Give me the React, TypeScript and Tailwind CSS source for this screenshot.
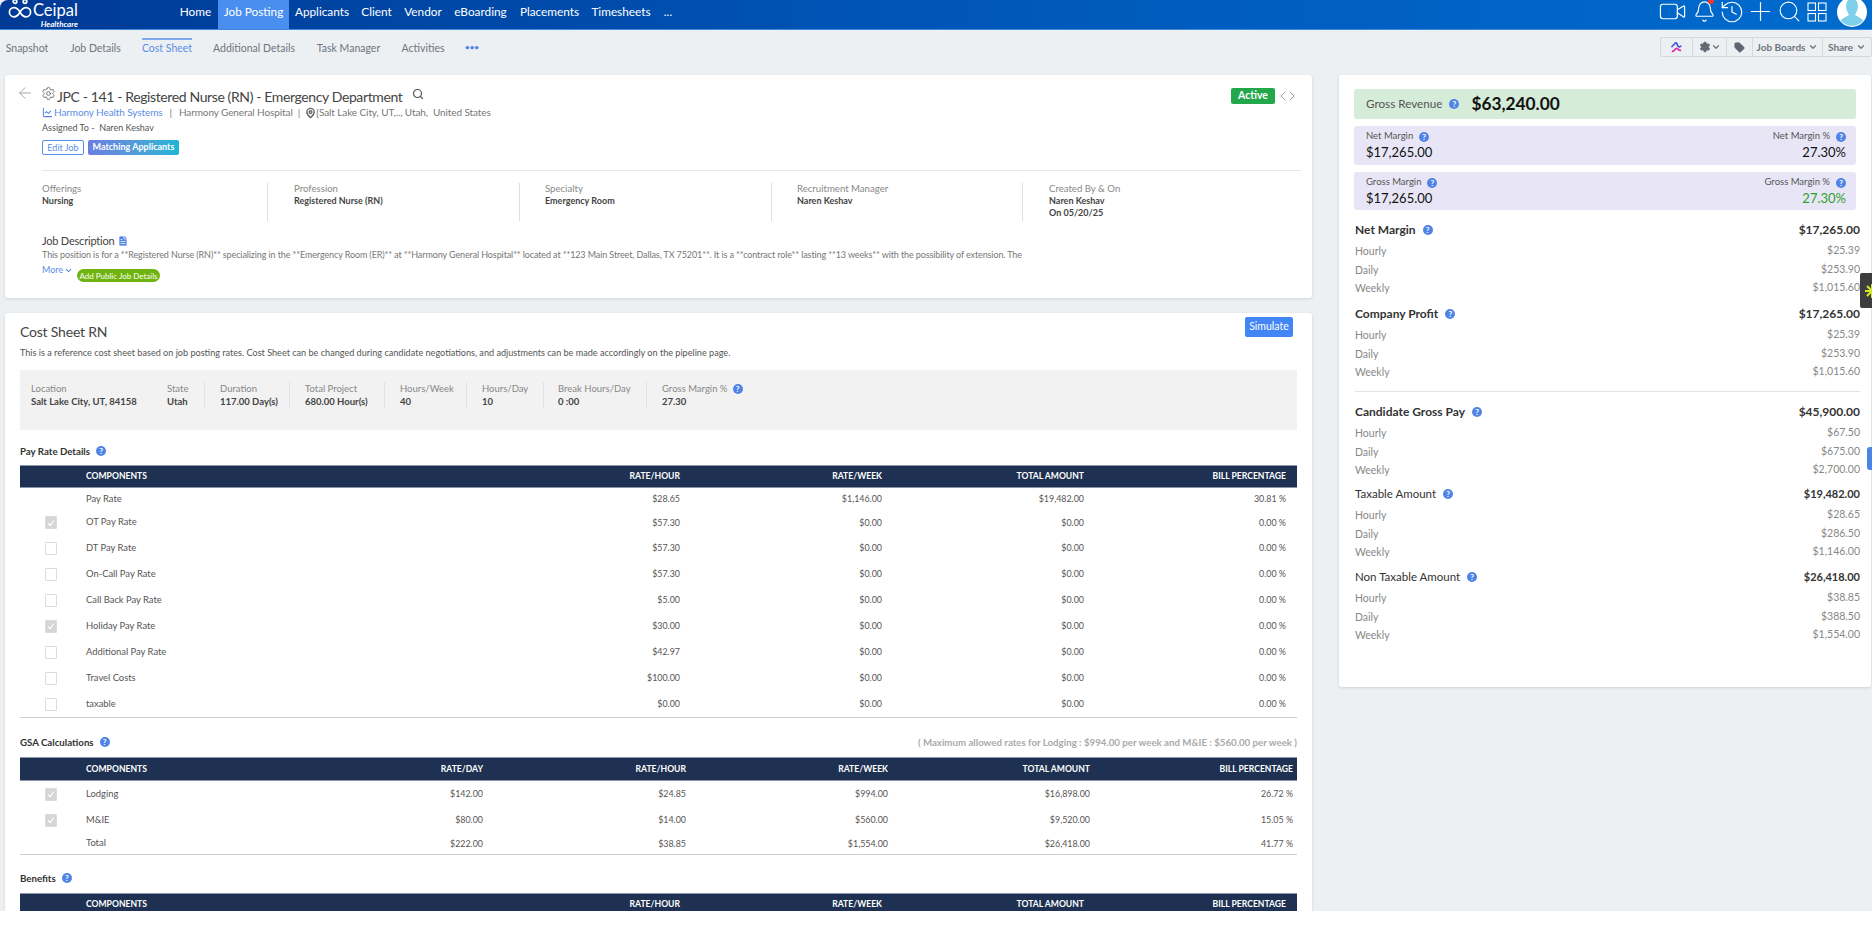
import { ArrowLeft, Bell, ChartLine, ChevronDown, ChevronLeft, ChevronRight, FileText, History, MapPin, Plus, Search, Settings, Tag, Video } from "lucide-react"

const NAV = [
  { label: "Home", w: "w-[45px]" },
  { label: "Job Posting", w: "w-[71px]", active: true },
  { label: "Applicants", w: "w-[66px]" },
  { label: "Client", w: "w-[43px]" },
  { label: "Vendor", w: "w-[50px]" },
  { label: "eBoarding", w: "w-[65px]" },
  { label: "Placements", w: "w-[73px]" },
  { label: "Timesheets", w: "w-[70px]" },
  { label: "...", w: "w-[24px]" },
]

const SUBNAV = [
  { label: "Snapshot", w: "w-[44px]" },
  { label: "Job Details", w: "w-[51px]" },
  { label: "Cost Sheet", w: "w-[50px]", active: true },
  { label: "Additional Details", w: "w-[82px]" },
  { label: "Task Manager", w: "w-[65px]" },
  { label: "Activities", w: "w-[42px]" },
]

const DETAILS = [
  { label: "Offerings", value: ["Nursing"], cls: "w-[226px] border-r" },
  { label: "Profession", value: ["Registered Nurse (RN)"], cls: "w-[252px] pl-[26px] border-r" },
  { label: "Specialty", value: ["Emergency Room"], cls: "w-[252px] pl-[25px] border-r" },
  { label: "Recruitment Manager", value: ["Naren Keshav"], cls: "w-[251px] pl-[25px] border-r" },
  { label: "Created By & On", value: ["Naren Keshav", "On 05/20/25"], cls: "pl-[26px]" },
]

const SUMMARY = [
  { label: "Location", value: "Salt Lake City, UT, 84158", cls: "w-[136px]" },
  { label: "State", value: "Utah", cls: "w-[38px] border-r" },
  { label: "Duration", value: "117.00 Day(s)", cls: "w-[85px] pl-[15px] border-r" },
  { label: "Total Project", value: "680.00 Hour(s)", cls: "w-[95px] pl-[15px] border-r" },
  { label: "Hours/Week", value: "40", cls: "w-[82px] pl-[15px] border-r" },
  { label: "Hours/Day", value: "10", cls: "w-[77px] pl-[15px] border-r" },
  { label: "Break Hours/Day", value: "0 :00", cls: "w-[103px] pl-[14px] border-r" },
]

const PAY_ROWS = [
  ["Pay Rate", "$28.65", "$1,146.00", "$19,482.00", "30.81 %", null, "h-[22px]"],
  ["OT Pay Rate", "$57.30", "$0.00", "$0.00", "0.00 %", true, "h-[25px]"],
  ["DT Pay Rate", "$57.30", "$0.00", "$0.00", "0.00 %", false, "h-[26px]"],
  ["On-Call Pay Rate", "$57.30", "$0.00", "$0.00", "0.00 %", false, "h-[26px]"],
  ["Call Back Pay Rate", "$5.00", "$0.00", "$0.00", "0.00 %", false, "h-[26px]"],
  ["Holiday Pay Rate", "$30.00", "$0.00", "$0.00", "0.00 %", true, "h-[26px]"],
  ["Additional Pay Rate", "$42.97", "$0.00", "$0.00", "0.00 %", false, "h-[26px]"],
  ["Travel Costs", "$100.00", "$0.00", "$0.00", "0.00 %", false, "h-[26px]"],
  ["taxable", "$0.00", "$0.00", "$0.00", "0.00 %", false, "h-[26px]"],
] as const

const GSA_ROWS = [
  ["Lodging", "$142.00", "$24.85", "$994.00", "$16,898.00", "26.72 %", true, "h-[26px]"],
  ["M&IE", "$80.00", "$14.00", "$560.00", "$9,520.00", "15.05 %", true, "h-[26px]"],
  ["Total", "$222.00", "$38.85", "$1,554.00", "$26,418.00", "41.77 %", null, "h-[21px]"],
] as const

const SECTIONS = [
  { title: "Net Margin", total: "$17,265.00", vals: ["$25.39", "$253.90", "$1,015.60"], bold: true, cls: "mt-[11px]" },
  { title: "Company Profit", total: "$17,265.00", vals: ["$25.39", "$253.90", "$1,015.60"], bold: true, cls: "mt-[7px]" },
  { title: "Candidate Gross Pay", total: "$45,900.00", vals: ["$67.50", "$675.00", "$2,700.00"], bold: true, cls: "mt-[11px]" },
  { title: "Taxable Amount", total: "$19,482.00", vals: ["$28.65", "$286.50", "$1,146.00"], bold: false, cls: "mt-[5px]" },
  { title: "Non Taxable Amount", total: "$26,418.00", vals: ["$38.85", "$388.50", "$1,554.00"], bold: false, cls: "mt-[6px]" },
]

function Help({ className = "" }: { className?: string }) {
  return (
    <span className={`inline-flex items-center justify-center w-[10px] h-[10px] rounded-full bg-[#4f84e6] text-white text-[8px] font-bold leading-none shrink-0 ${className}`}>?</span>
  )
}

function Check({ on }: { on: boolean | null }) {
  if (on === null) return null
  return (
    <span className={`flex items-center justify-center w-[12px] h-[13px] rounded-[1px] border border-[#dcdcdc] ${on ? "bg-[#d6d6d6]" : "bg-white"}`}>
      {on && (
        <svg viewBox="0 0 12 12" className="w-[10px] h-[10px]" fill="none" stroke="#fff" strokeWidth="1.4">
          <path d="M2.5 6.5 5 9l4.5-6" />
        </svg>
      )}
    </span>
  )
}

function Logo() {
  return (
    <svg viewBox="0 0 24 20" className="w-[24px] h-[20px] shrink-0" fill="none" stroke="#fff" strokeWidth="1.7">
      <circle cx="7" cy="1.5" r="1.8" />
      <circle cx="17" cy="1.5" r="1.8" />
      <path d="M12 12c-1.6-2.6-3.2-4.4-6-4.4a4.6 4.6 0 0 0 0 9.2c2.8 0 4.4-1.8 6-4.8 1.6-2.6 3.2-4.4 6-4.4a4.6 4.6 0 0 1 0 9.2c-2.8 0-4.4-1.8-6-4.8Z" />
    </svg>
  )
}

function PayHeader() {
  return (
    <div className="grid grid-cols-[66px_392px_202px_202px_202px_202px] items-center h-[23px] bg-[#1e3152] border-t border-b border-[#8a94a6] text-white text-[8.6px] font-bold text-right whitespace-nowrap">
      <span />
      <span className="text-left">COMPONENTS</span>
      <span>RATE/HOUR</span>
      <span>RATE/WEEK</span>
      <span>TOTAL AMOUNT</span>
      <span>BILL PERCENTAGE</span>
    </div>
  )
}

export default function App() {
  return (
    <div className="relative h-[936px] w-[1872px] overflow-hidden bg-white font-['Lato',sans-serif]">
      <div className="h-[911px] overflow-hidden bg-[#edf0f3]">
        {/* top bar */}
        <header className="flex h-[30px] items-stretch overflow-hidden rounded-tl-[8px] bg-linear-to-r from-[#003a96] via-[#0056b8] to-[#006cce] text-white border-b border-[#3d8ae0]">
          <div className="w-[173px] pl-[8px] flex items-start gap-[1px] overflow-hidden">
            <Logo />
            <div className="flex flex-col items-end leading-none">
              <span className="text-[16.5px] leading-[21px] font-normal">Ceipal</span>
              <span className="text-[8px] leading-[7px] italic font-bold">Healthcare</span>
            </div>
          </div>
          {NAV.map(n => (
            <div key={n.label} className={`flex items-center justify-center pb-[6px] text-[11.8px] ${n.w} ${n.active ? "bg-[#4a8ff0]" : ""}`}>
              {n.label}
            </div>
          ))}
          <div className="ml-auto flex items-center pr-[5px] pb-[6px]">
            <Video className="w-[29px] h-[29px]" strokeWidth={1} />
            <span className="relative ml-[6px]">
              <Bell className="w-[23px] h-[23px]" strokeWidth={1.2} />
              <span className="absolute -top-[2px] right-[2px] w-[6px] h-[6px] rounded-full bg-[#f0392b]" />
            </span>
            <History className="ml-[3px] w-[26px] h-[26px]" strokeWidth={1.1} />
            <Plus className="w-[31px] h-[31px]" strokeWidth={0.9} />
            <Search className="ml-[1px] w-[25px] h-[25px]" strokeWidth={1.1} />
            <svg viewBox="0 0 20 20" className="ml-[5px] w-[20px] h-[20px]" fill="none" stroke="#fff" strokeWidth="1.1">
              <rect x="1" y="1" width="7.5" height="7.5" />
              <rect x="11.5" y="1" width="7.5" height="7.5" />
              <rect x="1" y="11.5" width="7.5" height="7.5" />
              <rect x="11.5" y="11.5" width="7.5" height="7.5" />
            </svg>
            <svg viewBox="0 0 30 30" className="ml-[10px] w-[30px] h-[30px] shrink-0">
              <circle cx="15" cy="15" r="15" fill="#fff" />
              <path d="M15 2c4 0 6 3 6 7 0 4-2 7-3 9 3 2 7 3 8 6a15 15 0 0 1-22 0c1-3 5-4 8-6-1-2-3-5-3-9 0-4 2-7 6-7Z" fill="#7fd0ea" />
            </svg>
          </div>
        </header>

        {/* sub nav */}
        <div className="flex h-[45px] items-start justify-between pt-[7px]">
          <div className="flex items-start gap-[21px] pl-[5px] pt-[1px] text-[10.5px] text-[#6f757c]">
            {SUBNAV.map(s => (
              <span key={s.label} className={`h-[20px] pt-[1px] flex items-center justify-center whitespace-nowrap ${s.w} ${s.active ? "border-t-2 border-[#7fa8ee] text-[#5b8ee6] pb-[2px]" : ""}`}>{s.label}</span>
            ))}
            <span className="h-[20px] flex items-center text-[#4f84e6] text-[8px] font-bold pb-[2px]">•••</span>
          </div>
          <div className="flex h-[20px] border border-[#d5d8dc] rounded-[2px] text-[10px] font-bold text-[#6f757c]">
            <div className="flex w-[32px] items-center justify-center border-r border-[#d5d8dc]">
              <svg viewBox="0 0 14 14" className="w-[13px] h-[13px]" fill="none" strokeWidth="1.8">
                <path d="M1.5 6.5 6.5 1.5" stroke="#4f5fe0" />
                <path d="M2 11c3 1 3-3 5-3s2 3 5 2" stroke="#d82fb0" />
                <path d="M6 2c3 0 1 3 3 4s3-1 3-1" stroke="#3a50d8" />
              </svg>
            </div>
            <div className="flex w-[34px] items-center justify-center border-r border-[#d5d8dc]">
              <Settings className="w-[12px] h-[12px]" fill="#5d6570" strokeWidth={2} />
              <ChevronDown className="w-[10px] h-[10px]" strokeWidth={3} />
            </div>
            <div className="flex w-[26px] items-center justify-center border-r border-[#d5d8dc]">
              <Tag className="w-[11px] h-[11px] text-[#5d6570]" fill="#5d6570" />
            </div>
            <div className="flex w-[70px] items-center justify-center gap-[3px] border-r border-[#d5d8dc]">
              Job Boards <ChevronDown className="w-[10px] h-[10px]" strokeWidth={3} />
            </div>
            <div className="flex w-[48px] items-center justify-center gap-[3px]">
              Share <ChevronDown className="w-[10px] h-[10px]" strokeWidth={3} />
            </div>
          </div>
        </div>

        <div className="flex items-start gap-[27px] pl-[5px]">
          {/* left column */}
          <div className="w-[1307px] flex flex-col gap-[15px]">
            <section className="h-[223px] bg-white rounded-[3px] shadow-[0_1px_3px_rgba(0,0,0,0.12)] flex pr-[11px]">
              <div className="w-[37px] shrink-0 pl-[11px] pt-[9px]">
                <ArrowLeft className="w-[18px] h-[18px] text-[#9aa0a6]" strokeWidth={1.2} />
              </div>
              <div className="flex-1 min-w-0 pt-[12px]">
                <div className="flex h-[18px] items-center text-[#444]">
                  <Settings className="w-[15px] h-[15px] -ml-[1px] mr-[1px] -mt-[5px] text-[#666]" strokeWidth={1.4} />
                  <h1 className="text-[14px] tracking-[-0.38px] font-normal whitespace-nowrap">JPC - 141 - Registered Nurse (RN) - Emergency Department</h1>
                  <Search className="w-[12px] h-[12px] ml-[10px] -mt-[5px] text-[#555]" strokeWidth={2.4} />
                  <div className="ml-auto flex items-center mr-[1px]">
                    <span className="flex items-center justify-center w-[44px] h-[16px] rounded-[2px] bg-[#22a84a] text-white text-[10.5px] font-bold">Active</span>
                    <ChevronLeft className="w-[16px] h-[16px] text-[#888]" strokeWidth={1.2} />
                    <ChevronRight className="w-[16px] h-[16px] -ml-[7px] text-[#888]" strokeWidth={1.2} />
                  </div>
                </div>
                <div className="flex h-[15px] items-center text-[10px] tracking-[-0.1px] text-[#777] whitespace-nowrap">
                  <ChartLine className="w-[11px] h-[11px] text-[#4f84e6] mr-[1px]" strokeWidth={2.2} />
                  <span className="text-[#5b8ee6]">Harmony Health Systems</span>
                  <span className="mx-[7px]">|</span>
                  <span>Harmony General Hospital</span>
                  <span className="mx-[5px]">|</span>
                  <MapPin className="w-[11px] h-[12px] text-[#666]" strokeWidth={3} />
                  <span>[Salt Lake City, UT,.., Utah,&nbsp; United States</span>
                </div>
                <div className="h-[15px] flex items-center text-[9px] text-[#555]">Assigned To -&nbsp; Naren Keshav</div>
                <div className="mt-[5px] flex gap-[4px] h-[15px] text-[9px]">
                  <span className="flex w-[42px] items-center justify-center rounded-[2px] border border-[#5b8ee6] text-[#5b8ee6]">Edit Job</span>
                  <span className="flex w-[91px] items-center justify-center rounded-[2px] bg-linear-to-r from-[#6a7fe0] to-[#19b5d5] text-white font-bold pb-[2px]">Matching Applicants</span>
                </div>
                <div className="mt-[15px] border-t border-[#e5e7ea]" />
                <div className="mt-[12px] flex h-[38px]">
                  {DETAILS.map(d => (
                    <div key={d.label} className={`border-[#dcdfe3] ${d.cls}`}>
                      <div className="text-[9.6px] leading-[12px] text-[#888]">{d.label}</div>
                      <div className="text-[9px] leading-[12px] font-bold text-[#444]">
                        {d.value.map(v => <div key={v}>{v}</div>)}
                      </div>
                    </div>
                  ))}
                </div>
                <div className="mt-[12px] h-[16px] flex items-center gap-[3px] text-[11px] tracking-[-0.2px] text-[#444]">
                  Job Description
                  <FileText className="w-[12px] h-[14px] text-white" fill="#4f84e6" strokeWidth={1.5} />
                </div>
                <p className="h-[12px] text-[9px] tracking-[-0.11px] leading-[12px] text-[#777] whitespace-nowrap">This position is for a **Registered Nurse (RN)** specializing in the **Emergency Room (ER)** at **Harmony General Hospital** located at **123 Main Street, Dallas, TX 75201**. It is a **contract role** lasting **13 weeks** with the possibility of extension. The</p>
                <div className="mt-[2px] flex items-start">
                  <span className="flex items-center gap-[1px] h-[14px] w-[35px] text-[9px] text-[#5b8ee6]">More <ChevronDown className="w-[9px] h-[9px]" strokeWidth={3} /></span>
                  <span className="mt-[6px] flex items-center justify-center w-[83px] h-[13px] rounded-full bg-[#6fb40e] text-[8px] text-white">Add Public Job Details</span>
                </div>
              </div>
            </section>

            <section className="h-[600px] bg-white rounded-[3px] shadow-[0_1px_3px_rgba(0,0,0,0.12)] px-[15px] pt-[4px]">
              <div className="flex h-[25px] items-start justify-between">
                <h2 className="mt-[5px] text-[14px] tracking-[-0.2px] leading-[20px] font-normal text-[#444]">Cost Sheet RN</h2>
                <button className="mr-[4px] w-[48px] h-[20px] rounded-[2px] bg-[#4285f4] text-white text-[10.5px]">Simulate</button>
              </div>
              <p className="mt-[4px] h-[14px] text-[9.1px] leading-[14px] text-[#555] whitespace-nowrap">This is a reference cost sheet based on job posting rates. Cost Sheet can be changed during candidate negotiations, and adjustments can be made accordingly on the pipeline page.</p>

              <div className="mt-[10px] h-[60px] bg-[#f2f2f2] pl-[11px] pt-[12px] flex items-start">
                {SUMMARY.map(s => (
                  <div key={s.label} className={`h-[26px] border-[#e2e2e2] whitespace-nowrap ${s.cls}`}>
                    <div className="text-[9.5px] leading-[13px] text-[#888]">{s.label}</div>
                    <div className="text-[9.5px] leading-[13px] font-bold text-[#444]">{s.value}</div>
                  </div>
                ))}
                <div className="h-[26px] pl-[15px] whitespace-nowrap">
                  <div className="flex items-center gap-[5px] text-[9.5px] leading-[13px] text-[#888]">Gross Margin % <Help /></div>
                  <div className="text-[9.5px] leading-[13px] font-bold text-[#444]">27.30</div>
                </div>
              </div>

              <div className="mt-[14px] h-[14px] flex items-center gap-[6px] text-[9.7px] font-bold text-[#333]">Pay Rate Details <Help /></div>
              <div className="mt-[7px]">
                <PayHeader />
                <div className="border-b border-[#d0d0d0]">
                  {PAY_ROWS.map(r => (
                    <div key={r[0]} className={`grid grid-cols-[66px_392px_202px_202px_202px_202px] items-center text-[8.9px] text-[#555] text-right ${r[6]}`}>
                      <span className="pl-[25px]"><Check on={r[5]} /></span>
                      <span className="text-left text-[9.4px]">{r[0]}</span>
                      <span>{r[1]}</span>
                      <span>{r[2]}</span>
                      <span>{r[3]}</span>
                      <span>{r[4]}</span>
                    </div>
                  ))}
                </div>
              </div>

              <div className="mt-[17px] h-[14px] flex items-center text-[9.7px] font-bold text-[#333]">
                <span>GSA Calculations</span>
                <Help className="ml-[6px]" />
                <span className="ml-auto text-[#aaa]">( Maximum allowed rates for Lodging : $994.00 per week and M&amp;IE : $560.00 per week )</span>
              </div>
              <div className="mt-[8px]">
                <div className="grid grid-cols-[66px_197px_200px_203px_202px_202px_203px] items-center h-[24px] bg-[#1e3152] border-t border-b border-[#8a94a6] text-white text-[8.6px] font-bold text-right whitespace-nowrap">
                  <span />
                  <span className="text-left">COMPONENTS</span>
                  <span>RATE/DAY</span>
                  <span>RATE/HOUR</span>
                  <span>RATE/WEEK</span>
                  <span>TOTAL AMOUNT</span>
                  <span>BILL PERCENTAGE</span>
                </div>
                <div className="border-b border-[#d0d0d0]">
                  {GSA_ROWS.map(r => (
                    <div key={r[0]} className={`grid grid-cols-[66px_197px_200px_203px_202px_202px_203px] items-center text-[8.9px] text-[#555] text-right ${r[7]}`}>
                      <span className="pl-[25px]"><Check on={r[6]} /></span>
                      <span className="text-left text-[9.4px]">{r[0]}</span>
                      <span>{r[1]}</span>
                      <span>{r[2]}</span>
                      <span>{r[3]}</span>
                      <span>{r[4]}</span>
                      <span>{r[5]}</span>
                    </div>
                  ))}
                </div>
              </div>

              <div className="mt-[16px] h-[14px] flex items-center gap-[6px] text-[9.7px] font-bold text-[#333]">Benefits <Help /></div>
              <div className="mt-[8px]">
                <PayHeader />
              </div>
            </section>
          </div>

          {/* right column */}
          <aside className="w-[532px] h-[612px] bg-white rounded-[3px] shadow-[0_1px_3px_rgba(0,0,0,0.12)] pl-[15px] pr-[15px] pt-[14px]">
            <div className="flex h-[30px] items-center rounded-[3px] bg-[#d5ecd9] pl-[12px]">
              <span className="text-[11.7px] text-[#555]">Gross Revenue</span>
              <Help className="ml-[7px]" />
              <span className="ml-[12px] text-[17.3px] font-bold text-[#111]">$63,240.00</span>
            </div>
            <Margin className="mt-[7px] h-[39px]" left="Net Margin" right="Net Margin %" />
            <Margin className="mt-[7px] h-[38px]" left="Gross Margin" right="Gross Margin %" green />
            <div className="-mr-[4px] pl-[1px]">
              {SECTIONS.map((s, i) => (
                <div key={s.title}>
                  {i === 2 && <div className="mt-[9px] border-t border-[#e2e4e7]" />}
                  <div className={s.cls}>
                    <div className={`flex h-[18px] items-center justify-between text-[#333] ${s.bold ? "font-bold text-[12px]" : "text-[11.5px]"}`}>
                      <span className="flex items-center gap-[7px]">{s.title} <Help /></span>
                      <span className={s.bold ? "" : "font-bold text-[11px]"}>{s.total}</span>
                    </div>
                    {["Hourly", "Daily", "Weekly"].map((l, j) => (
                      <div key={l} className={`flex h-[18px] items-center justify-between text-[10.5px] text-[#888] ${j === 0 ? "mt-[4px]" : j === 1 ? "mt-[1px]" : ""}`}>
                        <span>{l}</span>
                        <span className="pb-[3px]">{s.vals[j]}</span>
                      </div>
                    ))}
                  </div>
                </div>
              ))}
            </div>
          </aside>
        </div>
      </div>

      {/* floating side tabs */}
      <div className="absolute right-0 top-[273px] flex w-[12px] h-[35px] items-center overflow-hidden rounded-l-[2px] bg-[#3d3d3d] pl-[4px]">
        <svg viewBox="0 0 16 16" className="w-[16px] h-[16px] shrink-0" fill="none" stroke="#d6e82a" strokeWidth="2">
          <path d="M8 1v14M1 8h14M3 3l10 10M13 3 3 13" />
        </svg>
      </div>
      <div className="absolute right-0 top-[447px] w-[5px] h-[23px] rounded-l-[3px] bg-[#4a86e8]" />
    </div>
  )
}

function Margin({ className, left, right, green }: { className: string; left: string; right: string; green?: boolean }) {
  return (
    <div className={`flex items-stretch justify-between rounded-[3px] bg-[#e8e6f6] pr-[10px] pl-[12px] pt-[4px] ${className}`}>
      <div>
        <div className="flex h-[13px] items-center gap-[6px] text-[9.5px] text-[#555]">{left} <Help /></div>
        <div className="text-[13px] leading-[18px] text-[#111]">$17,265.00</div>
      </div>
      <div className="flex flex-col items-end">
        <div className="flex h-[13px] items-center gap-[6px] text-[9.5px] text-[#555]">{right} <Help /></div>
        <div className={`text-[13px] leading-[18px] ${green ? "text-[#2ca02c]" : "text-[#111]"}`}>27.30%</div>
      </div>
    </div>
  )
}
